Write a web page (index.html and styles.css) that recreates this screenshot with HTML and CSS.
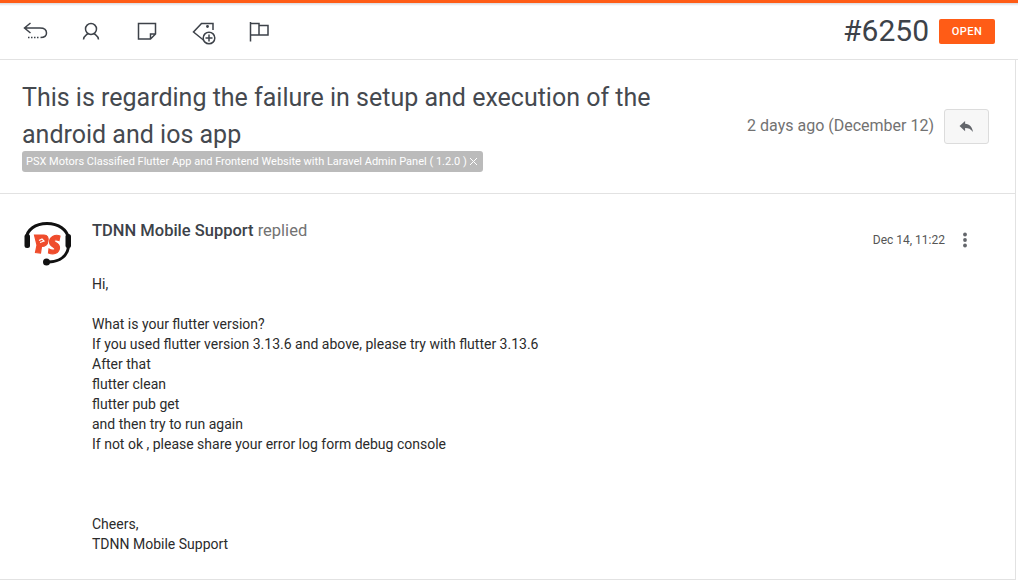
FILE: index.html
```html
<!DOCTYPE html>
<html lang="en">
<head>
<meta charset="utf-8">
<title>Ticket #6250</title>
<link rel="stylesheet" href="styles.css">
</head>
<body>
<div class="accent"></div>
<header class="toolbar">
  <nav class="tools">
    <span class="slot"><svg class="tool" width="24" height="24" viewBox="0 0 24 24"><path d="M7.500 4 1.500 9 7.500 14M1.500 9H17C21 9 23.500 11 23.500 14S21 18.500 17.500 18.500"/><path class="dots" d="M5 18.500H15.500"/></svg></span>
    <span class="slot"><svg class="tool" width="24" height="24" viewBox="0 0 24 24"><circle cx="12" cy="10" r="5.500"/><path d="M4.500 20.500C4.500 17 7 16.500 9 14.500M19.500 20.500C19.500 17 17 16.500 15 14.500"/></svg></span>
    <span class="slot"><svg class="tool" width="24" height="24" viewBox="0 0 24 24"><path d="M3.500 4.500H20.500V15L15.500 20H3.500ZM15.500 20V15H20.500"/></svg></span>
    <span class="slot"><svg class="tool" width="24" height="24" viewBox="0 0 24 24"><path d="M13 21.500 2.500 13 10.500 4.500H22V11"/><circle cx="16.500" cy="7.500" r="0.700"/><circle class="badge" cx="18" cy="19" r="5.800"/><path d="M18 15.500V22.500M14.500 19H21.500"/></svg></span>
    <span class="slot"><svg class="tool" width="24" height="24" viewBox="0 0 24 24"><path d="M3.500 3V22.500M3.500 4.500H12V16H3.500M12 6.500H21V16H12"/></svg></span>
  </nav>
  <div class="ticket-id">
    <span class="number">#6250</span>
    <span class="status">OPEN</span>
  </div>
</header>
<main class="card">
  <section class="summary">
    <div class="summary-text">
      <h1 class="title">This is regarding the failure in setup and execution of the android and ios app</h1>
      <span class="tag">PSX Motors Classified Flutter App and Frontend Website with Laravel Admin Panel ( 1.2.0 )<svg class="tag-x" width="9" height="9" viewBox="0 0 9 9"><path d="M1 1 8 8M8 1 1 8"/></svg></span>
    </div>
    <div class="summary-meta">
      <span class="age">2 days ago (December 12)</span>
      <button class="reply-btn" aria-label="Reply"><svg width="15" height="13" viewBox="0 0 16 14"><path class="solid" d="M6.500 1 0.500 6.500 6.500 12V8.500C10 8.500 12.800 9.500 15 13 14.500 8 11.500 4.500 6.500 4Z"/></svg></button>
    </div>
  </section>
  <article class="message">
    <svg class="avatar" width="48" height="48" viewBox="0 0 48 48">
      <path class="band" d="M3.500 17C4 9 12 2.500 24 2.500S44 9 45.500 17"/>
      <path class="band" d="M45.500 26C44 35 37 40.500 26 41"/>
      <rect class="ink" x="1.500" y="13" width="5.500" height="14" rx="2.500"/>
      <rect class="ink" x="42.500" y="13" width="5.500" height="14" rx="2.500"/>
      <circle class="ink" cx="23.500" cy="41" r="3.500"/>
      <path class="p" d="M11.500 14H21C24.500 14 25.500 17 25 20 24.500 24 22 25.500 18.500 25.500L17.500 32 12.500 31.500 14 24Z"/>
      <path class="p" d="M37 15 36 19.500C34 18.500 31 18.500 31 20 31 21.500 37 22 36.500 27 36 32.500 30.500 34 25.500 32L26 28C28 29.500 32 29.500 32 28 32 26 26.500 25.500 26.500 21 26.500 15.500 32.500 13 37 15Z"/>
      <path class="scribble" d="M16 19.500 19 18 21 20 17 21.500"/>
    </svg>
    <div class="message-body">
      <div class="message-head">
        <div class="author"><strong>TDNN Mobile Support</strong> <span>replied</span></div>
        <div class="message-meta">
          <time>Dec 14, 11:22</time>
          <svg class="kebab" width="6" height="16" viewBox="0 0 6 16"><circle cx="3" cy="2.500" r="1.900"/><circle cx="3" cy="8" r="1.900"/><circle cx="3" cy="13.500" r="1.900"/></svg>
        </div>
      </div>
      <div class="message-text">
        <p>Hi,</p>
        <p>What is your flutter version?<br>If you used flutter version 3.13.6 and above, please try with flutter 3.13.6<br>After that<br>flutter clean<br>flutter pub get<br>and then try to run again<br>If not ok , please share your error log form debug console</p>
        <p class="signoff">Cheers,<br>TDNN Mobile Support</p>
      </div>
    </div>
  </article>
</main>
</body>
</html>
```
FILE: styles.css
```css
* { box-sizing: border-box; }
html, body { margin: 0; height: 580px; overflow: hidden; background: #fff; }
body { font-family: Roboto, "Liberation Sans", sans-serif; color: #3d4249; display: flex; flex-direction: column; }
.accent { height: 6px; flex: none; background: linear-gradient(#ff5c16 0, #ff5c16 3px, #d9d9de 3px, #fff 6px); }
.toolbar { height: 54px; flex: none; display: flex; align-items: center; justify-content: space-between; padding: 0 23px 3px 7px; border-bottom: 1px solid #e2e2e2; }
.tools { display: flex; align-items: center; }
.slot { width: 56px; display: flex; justify-content: center; }
.tool { fill: none; stroke: #3d4249; stroke-width: 1.5; overflow: visible; }
.badge { fill: #fff; }
.dots { stroke-dasharray: 1.500 1.500; }
.ticket-id { display: flex; align-items: center; gap: 10px; }
.number { font-size: 30px; line-height: 34px; }
.status { width: 56px; height: 25px; border-radius: 2px; background: #ff5c16; color: #fff; font-size: 11px; font-weight: 500; letter-spacing: .5px; display: flex; align-items: center; justify-content: center; }
.card { flex: 1; margin-right: 2px; border-right: 1px solid #e2e2e2; border-bottom: 1px solid #e2e2e2; display: flex; flex-direction: column; }
.summary { height: 134px; flex: none; display: flex; justify-content: space-between; padding: 19px 26px 0 22px; border-bottom: 1px solid #e2e2e2; }
.summary-text { width: 650px; }
.title { margin: 0; font-size: 25px; line-height: 37px; font-weight: 400; color: #45494f; }
.tag { display: inline-flex; align-items: center; height: 21px; margin-top: -2px; padding: 0 4px; border-radius: 3px; background: #bbb; color: #fff; font-size: 11px; white-space: nowrap; vertical-align: top; }
.tag-x { flex: none; margin: -1px 1px 0 2px; fill: none; stroke: #fff; stroke-width: 1; }
.summary-meta { display: flex; align-items: flex-start; gap: 10px; padding-top: 30px; }
.age { font-size: 16px; line-height: 34px; color: #727272; }
.reply-btn { width: 45px; height: 35px; padding: 0; border: 1px solid #dcdcdc; border-radius: 3px; background: #f7f7f7; display: flex; align-items: center; justify-content: center; }
.solid { fill: #63666b; }
.message { display: flex; gap: 21px; padding: 22px 0 0 23px; }
.avatar { flex: none; width: 48px; height: 48px; margin-top: 5px; }
.band { fill: none; stroke: #111; stroke-width: 3; }
.ink { fill: #111; }
.p { fill: #ef4c2c; stroke: #ef4c2c; stroke-width: 1.200; }
.scribble { fill: none; stroke: #fff; stroke-width: 1.2; }
.message-body { flex: 1; padding-right: 47px; }
.message-head { display: flex; justify-content: space-between; align-items: flex-start; height: 58px; padding-top: 1px; }
.author { font-size: 16.500px; line-height: 28px; color: #727272; }
.author strong { font-weight: 500; color: #3d4249; }
.message-meta { display: flex; align-items: center; gap: 17px; padding-top: 15px; color: #555; font-size: 12px; font-weight: 400; }
.kebab { fill: #63666b; }
.message-text { font-size: 14px; line-height: 20px; color: #2b2b2b; }
.message-text p { margin: 0 0 20px; }
.signoff { margin-top: 60px !important; }
```
